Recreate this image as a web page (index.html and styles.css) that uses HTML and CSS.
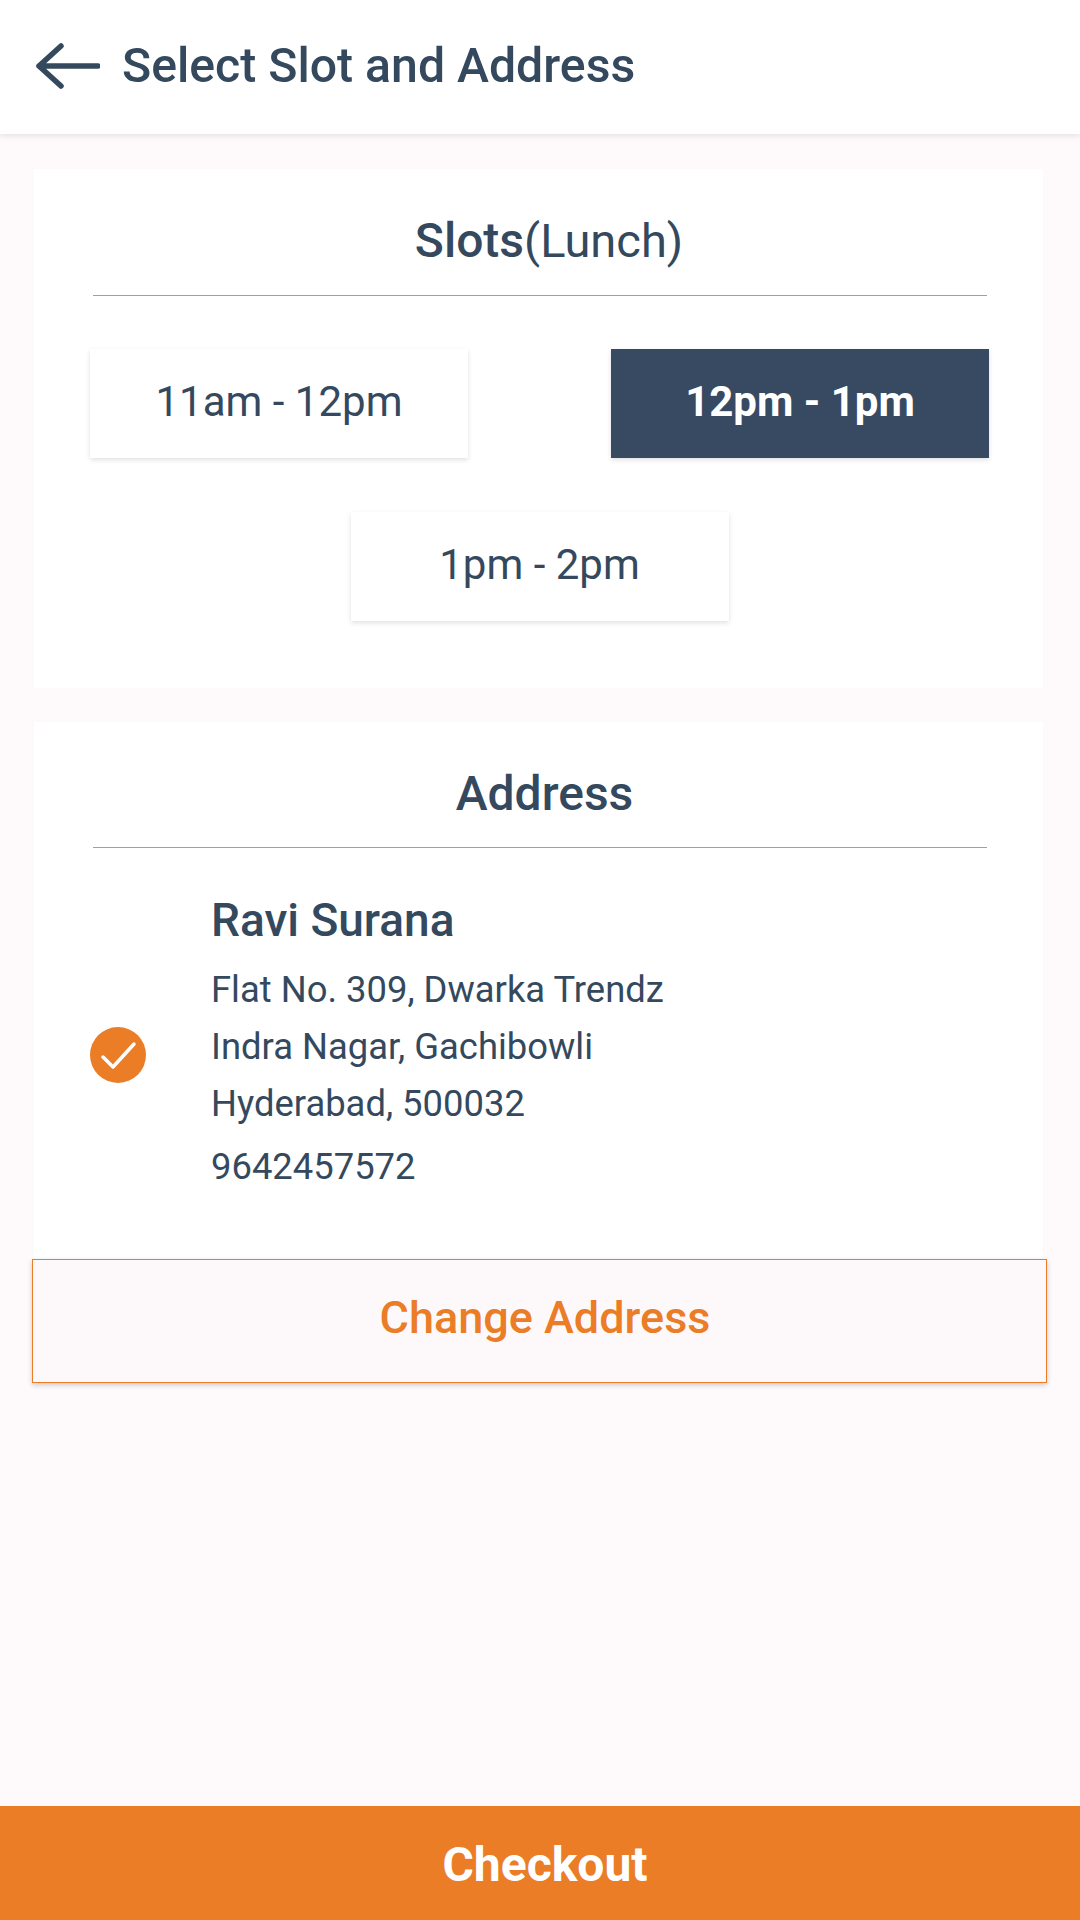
FILE: index.html
```html
<!DOCTYPE html>
<html lang="en">
<head>
    <meta charset="UTF-8">
    <meta name="viewport" content="width=device-width, initial-scale=1.0">
    <title>Select Slot and Address</title>
    <link rel="stylesheet" href="styles.css">
</head>
<body>
    <div class="page">
        <header class="topbar">
            <svg class="back-icon" width="64" height="46" viewBox="0 0 64 46" fill="none" stroke="#34495e" stroke-width="5.500" stroke-linecap="round" stroke-linejoin="round">
                <path d="M62 23H3M25 3L3 23L25 43"/>
            </svg>
            <h1>Select Slot and Address</h1>
        </header>

        <main class="content">
            <section class="card slots-card">
                <h2 class="card-title">Slots<span class="light">(Lunch)</span></h2>
                <div class="slots">
                    <div class="slot">11am - 12pm</div>
                    <div class="slot active">12pm - 1pm</div>
                    <div class="slot last">1pm - 2pm</div>
                </div>
            </section>

            <section class="card address-card">
                <h2 class="card-title">Address</h2>
                <div class="address">
                    <svg class="check-icon" width="56" height="56" viewBox="0 0 56 56">
                        <circle cx="28" cy="28" r="28" fill="#ea7d26"/>
                        <path d="M13 30L23 40L44 17" fill="none" stroke="#fff" stroke-width="3.500" stroke-linecap="round" stroke-linejoin="round"/>
                    </svg>
                    <div class="address-text">
                        <div class="name">Ravi Surana</div>
                        <div class="line">Flat No. 309, Dwarka Trendz</div>
                        <div class="line">Indra Nagar, Gachibowli</div>
                        <div class="line">Hyderabad, 500032</div>
                        <div class="line phone">9642457572</div>
                    </div>
                </div>
            </section>
            <button class="change-btn">Change Address</button>
        </main>

        <button class="checkout">Checkout</button>
    </div>
</body>
</html>
```

FILE: styles.css
```css
* {
    box-sizing: border-box;
}
body {
    margin: 0;
    font-family: Roboto, "Liberation Sans", sans-serif;
    color: #34495e;
    background-color: #fefafb;
}
.page {
    display: flex;
    flex-direction: column;
    height: 1920px;
}
.topbar {
    display: flex;
    align-items: center;
    gap: 22px;
    height: 134px;
    padding: 0 0 0 36px;
    background-color: white;
    box-shadow: 0 2px 6px rgba(0,0,0,0.1);
}
.topbar h1 {
    margin: 0 0 3px;
    font-size: 48.200px;
    font-weight: 500;
}
.back-icon {
    margin-top: -2px;
}
.content {
    flex-grow: 1;
    padding: 35px 37px 0 34px;
}
.card {
    background-color: white;
}
.slots-card {
    height: 519px;
    margin-bottom: 34px;
}
.address-card {
    height: 537px;
}
.card-title {
    margin: 0 56px 0 59px;
    height: 126px;
    padding: 40px 0 0 9px;
    line-height: 64px;
    border-bottom: 1px solid #95a5a6;
    text-align: center;
    font-size: 48px;
    font-weight: 500;
}
.slots-card .card-title {
    height: 127px;
    padding-left: 18px;
}
.light {
    font-size: 47px;
    font-weight: 400;
}
.slots {
    display: grid;
    grid-template-columns: 378px 378px;
    justify-content: space-between;
    row-gap: 54px;
    padding: 53px 54px 0 56px;
}
.slot {
    width: 378px;
    height: 109px;
    line-height: 105px;
    text-align: center;
    font-size: 42px;
    background-color: white;
    box-shadow: 0 2px 5px rgba(0,0,0,0.12);
}
.slot.active {
    background-color: #374a62;
    color: white;
    font-weight: 700;
}
.slot.last {
    grid-column: 1 / -1;
    justify-self: center;
}
.address {
    display: flex;
    align-items: center;
    gap: 65px;
    padding: 38px 0 0 56px;
}
.check-icon {
    flex-shrink: 0;
    margin-top: 28px;
}
.name {
    font-size: 46px;
    font-weight: 500;
    line-height: 68px;
    margin-bottom: 7px;
}
.line {
    font-size: 36.400px;
    line-height: 57px;
}
.phone {
    margin-top: 6px;
}
.change-btn {
    display: block;
    width: 1015px;
    height: 124px;
    margin: 0 0 0 -2px;
    padding: 0 0 7px 11px;
    font-family: inherit;
    font-size: 45px;
    font-weight: 500;
    color: #ea7d26;
    background-color: #fdf9fb;
    border: 1px solid #ea7d26;
    box-shadow: 0 2px 5px rgba(0,0,0,0.2);
}
.checkout {
    height: 114px;
    padding: 3px 0 0 10px;
    border: none;
    font-family: inherit;
    font-size: 48px;
    font-weight: 700;
    color: white;
    background-color: #ea7d26;
}
```
